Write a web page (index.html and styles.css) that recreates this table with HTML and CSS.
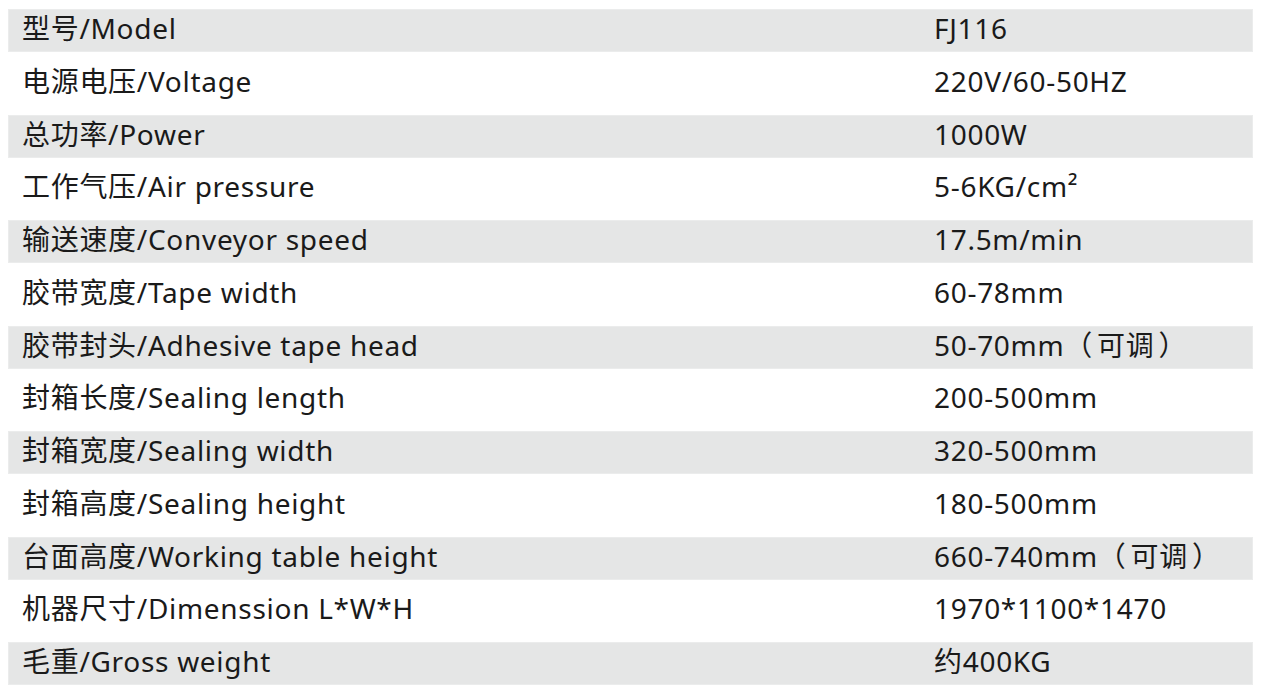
FILE: index.html
```html
<!DOCTYPE html>
<html lang="zh-CN">
<head>
<meta charset="utf-8">
<title>参数</title>
<link rel="stylesheet" href="styles.css">
</head>
<body>
<div class="specs">
  <div class="row shade"><span class="k">型号/Model</span><span class="v">FJ116</span></div>
  <div class="row"><span class="k">电源电压/Voltage</span><span class="v">220V/60-50HZ</span></div>
  <div class="row shade"><span class="k">总功率/Power</span><span class="v">1000W</span></div>
  <div class="row"><span class="k">工作气压/Air pressure</span><span class="v">5-6KG/cm²</span></div>
  <div class="row shade"><span class="k">输送速度/Conveyor speed</span><span class="v">17.5m/min</span></div>
  <div class="row"><span class="k">胶带宽度/Tape width</span><span class="v">60-78mm</span></div>
  <div class="row shade"><span class="k">胶带封头/Adhesive tape head</span><span class="v">50-70mm（<span class="adj">可调</span>）</span></div>
  <div class="row"><span class="k">封箱长度/Sealing length</span><span class="v">200-500mm</span></div>
  <div class="row shade"><span class="k">封箱宽度/Sealing width</span><span class="v">320-500mm</span></div>
  <div class="row"><span class="k">封箱高度/Sealing height</span><span class="v">180-500mm</span></div>
  <div class="row shade"><span class="k">台面高度/Working table height</span><span class="v">660-740mm（<span class="adj">可调</span>）</span></div>
  <div class="row"><span class="k">机器尺寸/Dimenssion L*W*H</span><span class="v">1970*1100*1470</span></div>
  <div class="row shade"><span class="k">毛重/Gross weight</span><span class="v">约400KG</span></div>
</div>
</body>
</html>
```
FILE: styles.css
```css
html, body {
  margin: 0;
  padding: 0;
  background: #ffffff;
}
body {
  font-family: "Noto Sans", "Noto Sans CJK SC", sans-serif;
  color: #1a1a1a;
}
.specs {
  width: 1245px;
  margin-left: 8px;
  padding-top: 9px;
  display: flex;
  flex-direction: column;
  gap: 9.75px;
}
.row {
  height: 43px;
  display: grid;
  grid-template-columns: 912px 1fr;
  padding: 0 0 4px 14px;
  align-items: center;
  font-size: 28px;
  line-height: 39px;
  letter-spacing: 0.7px;
  box-sizing: border-box;
}
.shade {
  background: #e5e6e6;
  box-shadow: inset 0 0 0 1px #ebecec;
}
.k, .v {
  white-space: nowrap;
}
.adj {
  margin: 0 4px;
}
```
